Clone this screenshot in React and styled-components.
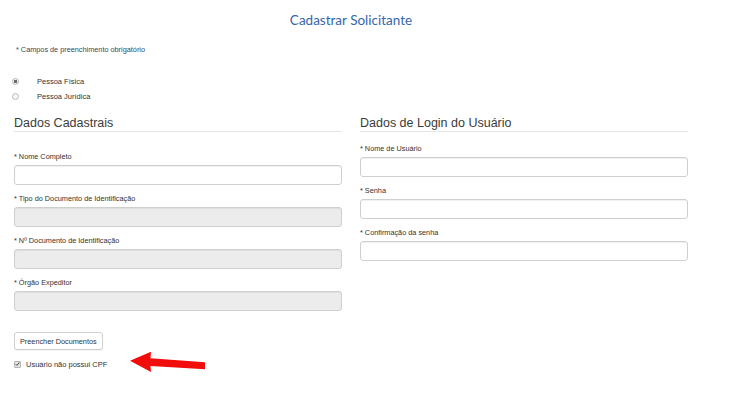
import React from "react";
import styled, { createGlobalStyle } from "styled-components";

const Global = createGlobalStyle`
  html, body { margin: 0; padding: 0; background: #fff; }
  body { font-family: "Liberation Sans", Arial, sans-serif; color: #333; }
  * { box-sizing: border-box; }
`;

const Page = styled.div`
  width: 730px;
  height: 395px;
  padding: 0 14px;
  position: relative;
  overflow: hidden;
`;

const Title = styled.h1`
  margin: 11px 0 0;
  font-family: Lato, "Open Sans", sans-serif;
  font-weight: 400;
  font-size: 13.5px;
  line-height: 18px;
  color: #3566ad;
  text-align: center;
  padding-right: 28px;
`;

const Note = styled.p`
  margin: 16px 0 0 2px;
  font-size: 7.3px;
  line-height: 10px;
  color: #34495e;
`;

const RadioGroup = styled.div`
  margin-top: 19px;
  display: flex;
  flex-direction: column;
`;

const RadioRow = styled.label`
  display: flex;
  align-items: center;
  height: 15px;
  font-size: 7.5px;
  color: #333;
`;

const RadioDot = styled.span`
  width: 7px;
  height: 7px;
  margin-left: -2px;
  margin-right: 18px;
  border-radius: 50%;
  border: 1px solid #b9b9b9;
  background: ${(p) => (p.$checked ? "radial-gradient(circle, #6a6a6a 0 1.5px, #f1f1f1 2px)" : "#f7f7f7")};
  flex: none;
`;

const Columns = styled.div`
  margin-top: 11px;
  display: grid;
  grid-template-columns: 328px 328px;
  column-gap: 18px;
  align-items: start;
`;

const Column = styled.section`
  display: flex;
  flex-direction: column;
`;

const SectionTitle = styled.h2`
  margin: 0;
  font-weight: 400;
  font-size: 12.5px;
  line-height: 16px;
  color: #3b3b3b;
  padding-bottom: 0;
  border-bottom: 1px solid #e6e6e6;
`;

const Fields = styled.div`
  margin-top: ${(p) => p.$offset}px;
  display: flex;
  flex-direction: column;
  gap: 9px;
`;

const Field = styled.div`
  display: flex;
  flex-direction: column;
  gap: 3px;
`;

const Label = styled.label`
  font-size: 7.3px;
  line-height: 10px;
  color: #333;
`;

const Input = styled.input`
  height: 20px;
  width: 100%;
  border: 1px solid #cfcfcf;
  border-radius: 3px;
  background: ${(p) => (p.disabled ? "#ececec" : "#fff")};
  box-shadow: inset 0 1px 1px rgba(0, 0, 0, 0.06);
  padding: 0 6px;
  font-size: 8px;
  outline: none;
`;

const Button = styled.button`
  margin-top: 21px;
  align-self: flex-start;
  height: 18px;
  padding: 0 5px;
  font-family: "Liberation Sans", Arial, sans-serif;
  font-size: 7.3px;
  color: #333;
  background: #fff;
  border: 1px solid #cfcfcf;
  border-radius: 3px;
  box-shadow: 0 1px 1px rgba(0, 0, 0, 0.05);
`;

const CheckRow = styled.label`
  margin-top: 9px;
  display: flex;
  align-items: center;
  gap: 5px;
  height: 10px;
  font-size: 7.5px;
  color: #333;
  position: relative;
`;

const CheckBox = styled.span`
  width: 7px;
  height: 7px;
  border: 1px solid #b5b5b5;
  border-radius: 1px;
  background: #e3e3e3;
  display: flex;
  align-items: center;
  justify-content: center;
  flex: none;
`;

const Arrow = styled.svg`
  position: absolute;
  left: 114px;
  top: -10px;
`;

const fieldsLeft = [
  { label: "* Nome Completo", disabled: false },
  { label: "* Tipo do Documento de Identificação", disabled: true },
  { label: "* Nº Documento de Identificação", disabled: true },
  { label: "* Órgão Expeditor", disabled: true },
];

const fieldsRight = [
  { label: "* Nome de Usuário", type: "text" },
  { label: "* Senha", type: "password" },
  { label: "* Confirmação da senha", type: "password" },
];

export default function App() {
  return (
    <>
      <Global />
      <Page>
        <Title>Cadastrar Solicitante</Title>
        <Note>* Campos de preenchimento obrigatório</Note>
        <RadioGroup>
          <RadioRow>
            <RadioDot $checked />
            Pessoa Física
          </RadioRow>
          <RadioRow>
            <RadioDot />
            Pessoa Jurídica
          </RadioRow>
        </RadioGroup>
        <Columns>
          <Column>
            <SectionTitle>Dados Cadastrais</SectionTitle>
            <Fields $offset={20}>
              {fieldsLeft.map((f) => (
                <Field key={f.label}>
                  <Label>{f.label}</Label>
                  <Input disabled={f.disabled} />
                </Field>
              ))}
            </Fields>
            <Button type="button">Preencher Documentos</Button>
            <CheckRow>
              <CheckBox>
                <svg width="6" height="6" viewBox="0 0 6 6">
                  <path d="M0.8 3.2 L2.3 4.7 L5.2 1.2" fill="none" stroke="#444" strokeWidth="1.2" />
                </svg>
              </CheckBox>
              Usuário não possui CPF
              <Arrow width="80" height="26" viewBox="0 0 80 26">
                <polygon
                  points="2,11.7 23,2.7 22.5,9.3 77,13.3 77,20.3 22.5,17 23,23"
                  fill="#f20d0d"
                />
              </Arrow>
            </CheckRow>
          </Column>
          <Column>
            <SectionTitle>Dados de Login do Usuário</SectionTitle>
            <Fields $offset={12}>
              {fieldsRight.map((f) => (
                <Field key={f.label}>
                  <Label>{f.label}</Label>
                  <Input type={f.type} />
                </Field>
              ))}
            </Fields>
          </Column>
        </Columns>
      </Page>
    </>
  );
}
